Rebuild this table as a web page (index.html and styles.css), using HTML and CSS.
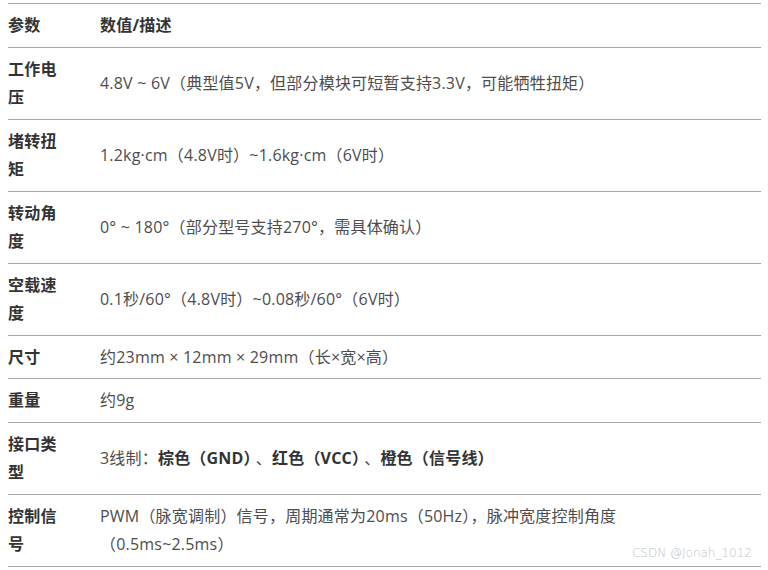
FILE: index.html
```html
<!DOCTYPE html>
<html lang="zh-CN">
<head>
<meta charset="utf-8">
<link rel="stylesheet" href="styles.css">
</head>
<body>
<div class="wrap">
<table class="spec">
  <colgroup><col class="c1"><col class="c2"></colgroup>
  <thead>
    <tr><th>参数</th><th>数值/描述</th></tr>
  </thead>
  <tbody>
    <tr><td class="k">工作电压</td><td>4.8V ~ 6V（典型值5V，但部分模块可短暂支持3.3V，可能牺牲扭矩）</td></tr>
    <tr><td class="k">堵转扭矩</td><td>1.2kg·cm（4.8V时）~1.6kg·cm（6V时）</td></tr>
    <tr><td class="k">转动角度</td><td>0° ~ 180°（部分型号支持270°，需具体确认）</td></tr>
    <tr><td class="k">空载速度</td><td>0.1秒/60°（4.8V时）~0.08秒/60°（6V时）</td></tr>
    <tr><td class="k">尺寸</td><td>约23mm × 12mm × 29mm（长×宽×高）</td></tr>
    <tr><td class="k">重量</td><td>约9g</td></tr>
    <tr><td class="k">接口类型</td><td>3线制：<b>棕色（GND）</b>、<b>红色（VCC）</b>、<b>橙色（信号线）</b></td></tr>
    <tr><td class="k">控制信号</td><td>PWM（脉宽调制）信号，周期通常为20ms（50Hz），脉冲宽度控制角度（0.5ms~2.5ms）</td></tr>
  </tbody>
</table>
<div class="mark">CSDN @Jonah_1012</div>
</div>
</body>
</html>
```
FILE: styles.css
```css
html, body {
  margin: 0;
  padding: 0;
  background: #fff;
}
.wrap {
  position: relative;
  padding: 3px 7px 0 8px;
}
.spec {
  width: 753px;
  border-collapse: collapse;
  table-layout: fixed;
  font-family: "Open Sans", "Noto Sans CJK SC", sans-serif;
  font-size: 16px;
  letter-spacing: 0.2px;
  color: #4d4d4d;
}
.c1 { width: 92px; }
.spec th, .spec td {
  border-top: 1px solid #a8a8a8;
  border-bottom: 1px solid #a8a8a8;
  padding: 7px 24px 7px 0;
  line-height: 28.5px;
  text-align: left;
  vertical-align: middle;
}
.spec th:first-child, .spec td.k {
  padding-right: 40px;
}
.spec th {
  font-weight: bold;
  color: #333;
}
.spec td.k {
  font-weight: bold;
  color: #333;
}
.spec b {
  color: #333;
  margin-right: 4px;
}
.mark {
  position: absolute;
  right: 16px;
  top: 546px;
  font-family: "DejaVu Sans", "Noto Sans", sans-serif;
  font-size: 12px;
  font-weight: 300;
  color: #c2c2c2;
}
```
